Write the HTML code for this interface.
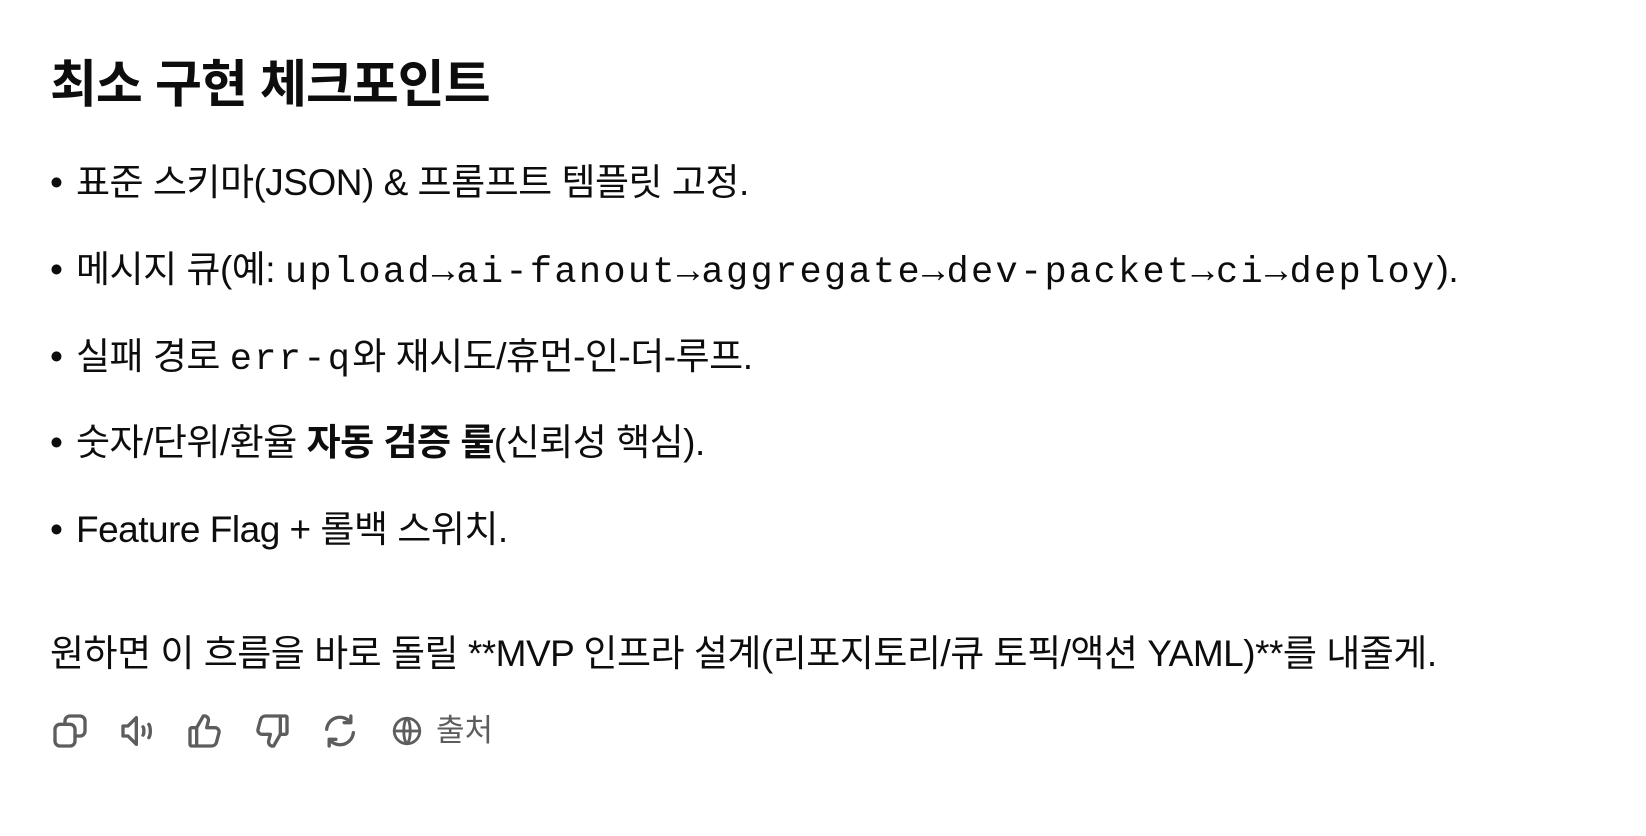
<!DOCTYPE html>
<html><head><meta charset="utf-8"><style>
body{margin:0;background:#fff;width:1646px;height:836px;overflow:hidden;color:#0d0d0d;font-family:"Liberation Sans","Noto Sans CJK KR",sans-serif}
h1{position:absolute;left:50px;top:55px;margin:0;font-size:51px;font-weight:700;line-height:60px;letter-spacing:-1px}
.l{position:absolute;left:50px;font-size:37px;line-height:40px;white-space:nowrap;letter-spacing:-0.5px}
.l .b{display:inline-block;width:26px;text-align:left}
code{font-family:"Liberation Mono",monospace;font-size:37px;letter-spacing:2.3px}
.icons{position:absolute;left:50px;top:711px;height:40px}
.icons svg{position:absolute;top:0}
.src{position:absolute;left:436px;top:711px;font-size:31px;color:#5d5d5d;line-height:40px}
</style></head><body>
<h1>최소 구현 체크포인트</h1>
<div class="l" style="top:163px"><span class="b">•</span>표준 스키마(JSON) &amp; 프롬프트 템플릿 고정.</div>
<div class="l" style="top:250px"><span class="b">•</span>메시지 큐(예: <code>upload→ai-fanout→aggregate→dev-packet→ci→deploy</code>).</div>
<div class="l" style="top:337px"><span class="b">•</span>실패 경로 <code>err-q</code>와 재시도/휴먼-인-더-루프.</div>
<div class="l" style="top:423px"><span class="b">•</span>숫자/단위/환율 <b>자동 검증 룰</b>(신뢰성 핵심).</div>
<div class="l" style="top:510px"><span class="b">•</span>Feature Flag + 롤백 스위치.</div>
<div class="l" style="top:634px">원하면 이 흐름을 바로 돌릴 **MVP 인프라 설계(리포지토리/큐 토픽/액션 YAML)**를 내줄게.</div>
<div class="icons">
<svg style="left:0" width="40" height="40" viewBox="0 0 24 24" fill="none" stroke="#5d5d5d" stroke-width="2" stroke-linecap="round" stroke-linejoin="round"><rect x="3" y="8" width="12" height="13" rx="3"/><path d="M9 8V6a3 3 0 0 1 3-3h6a3 3 0 0 1 3 3v6a3 3 0 0 1-3 3h-3"/></svg>
<svg style="left:68px" width="40" height="40" viewBox="0 0 24 24" fill="none" stroke="#5d5d5d" stroke-width="2" stroke-linecap="round" stroke-linejoin="round"><path d="M3 9h3l5-5v16l-5-5H3z"/><path d="M15 9.5c.7.8.7 4.2 0 5M18.5 8c1.2 1.8 1.2 6.2 0 8"/></svg>
<svg style="left:135px" width="40" height="40" viewBox="0 0 24 24" fill="none" stroke="#5d5d5d" stroke-width="2" stroke-linecap="round" stroke-linejoin="round"><path d="M7 10v11H4a1 1 0 0 1-1-1v-9a1 1 0 0 1 1-1zM7 10l4-7a2.5 2.5 0 0 1 3 3l-1 4h5a2.5 2.5 0 0 1 2.4 3l-1.6 6A3 3 0 0 1 16 21H7"/></svg>
<svg style="left:202px" width="40" height="40" viewBox="0 0 24 24" fill="none" stroke="#5d5d5d" stroke-width="2" stroke-linecap="round" stroke-linejoin="round"><path d="M17 14V3h3a1 1 0 0 1 1 1v9a1 1 0 0 1-1 1zM17 14l-4 7a2.5 2.5 0 0 1-3-3l1-4H6a2.5 2.5 0 0 1-2.4-3l1.6-6A3 3 0 0 1 8 3h9"/></svg>
<svg style="left:270px" width="40" height="40" viewBox="0 0 24 24" fill="none" stroke="#5d5d5d" stroke-width="2" stroke-linecap="round" stroke-linejoin="round"><path d="M4 11a8 8 0 0 1 14-4.5M20 13a8 8 0 0 1-14 4.5"/><path d="M18.5 3v4h-4M5.5 21v-4h4"/></svg>
<svg style="left:340px" width="34" height="40" viewBox="0 0 24 26" fill="none" stroke="#5d5d5d" stroke-width="2" stroke-linecap="round"><circle cx="12" cy="13" r="9"/><path d="M3 13h18M12 4c-3 3-3 15 0 18M12 4c3 3 3 15 0 18"/></svg>
</div>
<div class="src">출처</div>
</body></html>
